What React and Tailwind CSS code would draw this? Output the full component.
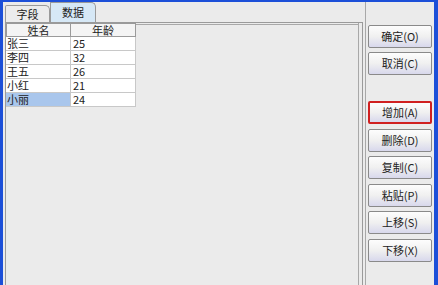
import React from 'react';

const rows = [
  ['张三', '25'],
  ['李四', '32'],
  ['王五', '26'],
  ['小红', '21'],
  ['小丽', '24'],
];

const buttons1 = ['确定(O)', '取消(C)'];
const buttons2 = ['增加(A)', '删除(D)', '复制(C)', '粘贴(P)', '上移(S)', '下移(X)'];

const font = { fontFamily: '"Noto Sans CJK SC", "Liberation Sans", sans-serif' };

const Btn = ({ label, focused }) => (
  <button
    className={`h-[23px] w-[64px] text-[11px] leading-none text-[#222] rounded-[2px] border bg-gradient-to-b from-[#fdfdfd] via-[#f0f0f0] to-[#d8d8ec] ${
      focused ? 'border-[#d02020] border-2' : 'border-[#8a8a8a]'
    }`}
  >
    {label}
  </button>
);

export default function App() {
  return (
    <div
      className="w-[438px] h-[285px] bg-[#ebebeb] border-l-[3px] border-t-[2px] border-r-[4px] border-[#1c4fd8] flex overflow-hidden"
      style={font}
    >
      {/* tabs + panel */}
      <div className="flex flex-col pl-[2px] w-[360px]">
        <div className="flex items-end h-[20px]">
          <div className="h-[17px] w-[45px] flex items-center justify-center text-[11px] leading-none text-[#222] border border-b-0 border-[#9a9a9a] rounded-tl-[2px] rounded-tr-[5px] bg-[#ececec]">
            字段
          </div>
          <div className="h-[20px] w-[46px] flex items-center justify-center text-[11px] leading-none text-[#222] border border-b-0 border-[#9a9a9a] rounded-tr-[5px] bg-[#d6e8f6]">
            数据
          </div>
        </div>
        <div className="flex-1 border border-[#9a9a9a] border-b-0 bg-[#ebebeb] pr-[3px]">
          <div className="h-full border-r border-[#a8a8a8] flex">
            <div className="w-[130px] flex flex-col">
              <div className="flex h-[14px] text-[11px] leading-none text-[#222]">
                <div className="w-[65px] flex items-center justify-center border border-[#9a9a9a] bg-[#f4f4f4]">姓名</div>
                <div className="w-[65px] flex items-center justify-center border border-l-0 border-[#9a9a9a] bg-[#f4f4f4]">年龄</div>
              </div>
              {rows.map(([n, a], i) => (
                <div key={n} className="flex h-[14px] text-[11px] leading-none text-[#222]">
                  <div
                    className={`w-[65px] pl-[1px] flex items-center border-b border-r border-[#c8c8c8] ${
                      i === 4 ? 'bg-[#a9c6ec]' : 'bg-white'
                    }`}
                  >
                    {n}
                  </div>
                  <div className="w-[65px] pl-[2px] flex items-center border-b border-r border-[#c8c8c8] bg-white">{a}</div>
                </div>
              ))}
            </div>
            <div className="flex-1 border-t border-[#a8a8a8] mt-[1px]" />
          </div>
        </div>
      </div>
      {/* right buttons */}
      <div className="flex-1 border-l border-[#a8a8a8] ml-[2px] flex flex-col items-center pt-[23px]">
        <div className="flex flex-col gap-[4px]">
          {buttons1.map((b) => (
            <Btn key={b} label={b} />
          ))}
        </div>
        <div className="flex flex-col gap-[4.5px] mt-[26px]">
          {buttons2.map((b, i) => (
            <Btn key={b} label={b} focused={i === 0} />
          ))}
        </div>
      </div>
    </div>
  );
}
